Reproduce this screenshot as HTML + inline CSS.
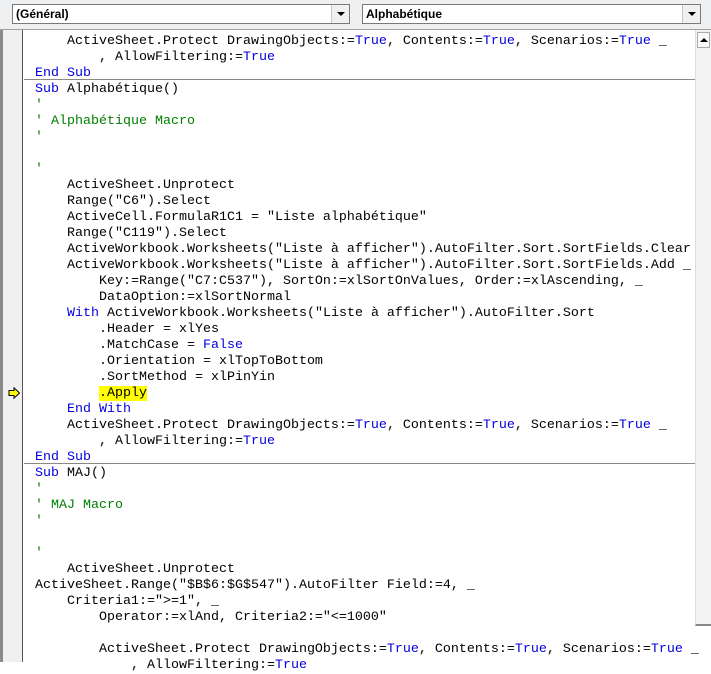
<!DOCTYPE html>
<html><head><meta charset="utf-8"><style>
body{margin:0;width:711px;height:662px;overflow:hidden;background:#fff;position:relative;font-family:"Liberation Mono",monospace}
#tb{position:absolute;left:0;top:0;width:711px;height:30px;background:#eef0f2;border-bottom:1px solid #a0a0a0;box-sizing:border-box}
.cb{position:absolute;top:4px;height:20px;background:#fff;border:1px solid #7a7a7a;box-sizing:border-box;font:bold 12px "Liberation Sans",sans-serif;line-height:18px;padding-left:3px;color:#000}
.btn{position:absolute;right:0;top:0;width:17px;height:18px;background:#f0f0f0;border-left:1px solid #c8c8c8}
.btn:after{content:"";position:absolute;left:5px;top:7px;border-left:4px solid transparent;border-right:4px solid transparent;border-top:4px solid #000}
#mg{position:absolute;left:0;top:30px;width:23px;height:632px;background:#f0f0f0;border-left:3px solid #8a8a8a;box-sizing:border-box;border-right:1px solid #555}
#sb{position:absolute;left:695px;top:30px;width:16px;height:596px;background:#f3f3f3;border-left:1px solid #ddd;border-bottom:2px solid #888;box-sizing:border-box}
#sb .up{position:absolute;left:1px;top:2px;width:13px;height:16px;background:#fafafa;border:1px solid #aaa;box-sizing:border-box}
#sb .up:after{content:"";position:absolute;left:2px;top:5px;border-left:4px solid transparent;border-right:4px solid transparent;border-bottom:4px solid #000}
#code{position:absolute;left:35px;top:34px;font-size:13.33px;line-height:16px;white-space:pre;color:#000}
.k{color:#0000e0}.c{color:#008000}
.hl{background:#ffff00}
.sep{position:absolute;left:24px;width:671px;height:1px;background:#888}
#arrow{position:absolute;left:8px;top:387px}
</style></head><body>
<div id="tb">
<div class="cb" style="left:12px;width:338px">(Général)<div class="btn"></div></div>
<div class="cb" style="left:362px;width:339px">Alphabétique<div class="btn"></div></div>
</div>
<div id="mg"></div>
<svg id="arrow" width="13" height="12" viewBox="0 0 13 12"><path d="M1 3.5H6V0.8L11.5 6L6 11.2V8.5H1Z" fill="#ffff00" stroke="#000" stroke-width="1"/></svg>
<div class="sep" style="top:79px"></div>
<div class="sep" style="top:463px"></div>
<div id="code">    ActiveSheet.Protect DrawingObjects:=<span class="k">True</span>, Contents:=<span class="k">True</span>, Scenarios:=<span class="k">True</span> _
        , AllowFiltering:=<span class="k">True</span>
<span class="k">End Sub</span>
<span class="k">Sub</span> Alphabétique()
<span class="c">'</span>
<span class="c">' Alphabétique Macro</span>
<span class="c">'</span>

<span class="c">'</span>
    ActiveSheet.Unprotect
    Range("C6").Select
    ActiveCell.FormulaR1C1 = "Liste alphabétique"
    Range("C119").Select
    ActiveWorkbook.Worksheets("Liste à afficher").AutoFilter.Sort.SortFields.Clear
    ActiveWorkbook.Worksheets("Liste à afficher").AutoFilter.Sort.SortFields.Add _
        Key:=Range("C7:C537"), SortOn:=xlSortOnValues, Order:=xlAscending, _
        DataOption:=xlSortNormal
    <span class="k">With</span> ActiveWorkbook.Worksheets("Liste à afficher").AutoFilter.Sort
        .Header = xlYes
        .MatchCase = <span class="k">False</span>
        .Orientation = xlTopToBottom
        .SortMethod = xlPinYin
        <span class="hl">.Apply</span>
    <span class="k">End With</span>
    ActiveSheet.Protect DrawingObjects:=<span class="k">True</span>, Contents:=<span class="k">True</span>, Scenarios:=<span class="k">True</span> _
        , AllowFiltering:=<span class="k">True</span>
<span class="k">End Sub</span>
<span class="k">Sub</span> MAJ()
<span class="c">'</span>
<span class="c">' MAJ Macro</span>
<span class="c">'</span>

<span class="c">'</span>
    ActiveSheet.Unprotect
ActiveSheet.Range("$B$6:$G$547").AutoFilter Field:=4, _
    Criteria1:="&gt;=1", _
        Operator:=xlAnd, Criteria2:="&lt;=1000"

        ActiveSheet.Protect DrawingObjects:=<span class="k">True</span>, Contents:=<span class="k">True</span>, Scenarios:=<span class="k">True</span> _
            , AllowFiltering:=<span class="k">True</span></div>
<div id="sb"><div class="up"></div></div>
</body></html>
